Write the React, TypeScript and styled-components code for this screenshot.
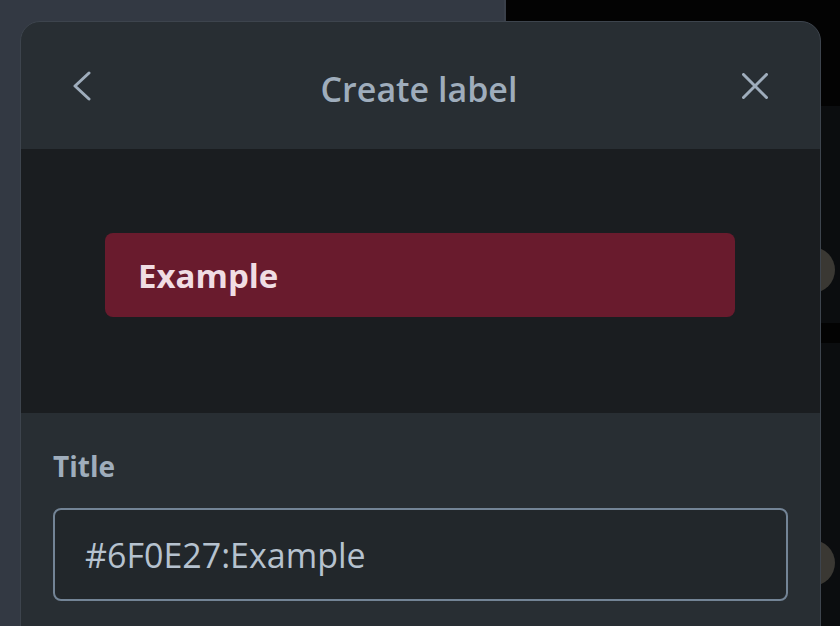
import React from "react";
import styled, { createGlobalStyle } from "styled-components";

const GlobalStyle = createGlobalStyle`
  html, body {
    margin: 0;
    padding: 0;
    background: #030303;
    font-family: "Open Sans", "Noto Sans", sans-serif;
  }
`;

const Page = styled.div`
  position: relative;
  display: flex;
  width: 840px;
  height: 626px;
  overflow: hidden;
`;

const BoardColumn = styled.div`
  width: 504px;
  background: #333943;
  border-right: 2px solid #3a404a;
`;

const SideArea = styled.div`
  flex: 1;
  display: flex;
  flex-direction: column;
  gap: 20px;
  padding-top: 106px;
  background: #030303;
`;

const SideCard = styled.div<{ $grow?: boolean; $avatarTop: number }>`
  display: flex;
  justify-content: flex-end;
  align-items: flex-start;
  box-sizing: border-box;
  height: ${(p) => (p.$grow ? "auto" : "217px")};
  flex: ${(p) => (p.$grow ? 1 : "none")};
  padding: ${(p) => p.$avatarTop}px 5px 0 0;
  background: #0b0d0f;
`;

const Avatar = styled.div`
  width: 46px;
  height: 46px;
  border-radius: 50%;
  background: #3a3833;
`;

const Popover = styled.section`
  position: absolute;
  left: 20px;
  top: 21px;
  width: 801px;
  height: 640px;
  box-sizing: border-box;
  border: 1px solid #3d444d;
  border-radius: 20px;
  background: #282e33;
  overflow: hidden;
  display: flex;
  flex-direction: column;
`;

const Header = styled.header`
  display: grid;
  grid-template-columns: 64px 1fr 64px;
  align-items: center;
  height: 127px;
  padding: 0 33px 0 30px;
`;

const IconButton = styled.button`
  display: flex;
  align-items: center;
  justify-content: center;
  width: 64px;
  height: 64px;
  padding: 0;
  border: none;
  background: transparent;
  color: #9fadbc;
  cursor: pointer;
`;

const Title = styled.h2`
  margin: 0;
  padding-top: 6px;
  text-align: center;
  font-size: 34px;
  font-weight: 600;
  color: #9fadbc;
`;

const Preview = styled.div`
  height: 264px;
  box-sizing: border-box;
  padding: 84px 85px 0 84px;
  background: #1a1d20;
`;

const LabelChip = styled.div<{ $color: string }>`
  display: flex;
  align-items: center;
  height: 84px;
  padding: 0 33px;
  border-radius: 8px;
  background: ${(p) => p.$color};
  color: #f0dde3;
  font-size: 33px;
  font-weight: 700;
`;

const Form = styled.div`
  display: flex;
  flex-direction: column;
  padding: 31px 32px 0 32px;
`;

const FieldLabel = styled.label`
  font-size: 28px;
  font-weight: 700;
  line-height: 44px;
  color: #9fadbc;
  margin-bottom: 20px;
`;

const TextInput = styled.input`
  height: 93px;
  box-sizing: border-box;
  padding: 0 30px;
  border: 2px solid #738496;
  border-radius: 8px;
  background: #22272b;
  color: #b6c2cf;
  font-family: inherit;
  font-size: 34px;
  outline: none;
`;

const ChevronLeft = () => (
  <svg width="20" height="32" viewBox="0 0 20 32" fill="none">
    <polyline
      points="16,3 2,16 16,29"
      stroke="currentColor"
      strokeWidth="3"
      strokeLinecap="round"
      strokeLinejoin="round"
    />
  </svg>
);

const CloseIcon = () => (
  <svg width="26" height="26" viewBox="0 0 26 26" fill="none">
    <path
      d="M1.5 1.5 L24.5 24.5 M24.5 1.5 L1.5 24.5"
      stroke="currentColor"
      strokeWidth="3"
      strokeLinecap="round"
    />
  </svg>
);

export default function App() {
  const color = "#691b2d";
  return (
    <>
      <GlobalStyle />
      <Page>
        <BoardColumn />
        <SideArea>
          <SideCard $avatarTop={141}>
            <Avatar />
          </SideCard>
          <SideCard $grow $avatarTop={197}>
            <Avatar />
          </SideCard>
        </SideArea>
        <Popover>
          <Header>
            <IconButton aria-label="Back">
              <ChevronLeft />
            </IconButton>
            <Title>Create label</Title>
            <IconButton aria-label="Close">
              <CloseIcon />
            </IconButton>
          </Header>
          <Preview>
            <LabelChip $color={color}>Example</LabelChip>
          </Preview>
          <Form>
            <FieldLabel>Title</FieldLabel>
            <TextInput defaultValue="#6F0E27:Example" />
          </Form>
        </Popover>
      </Page>
    </>
  );
}
